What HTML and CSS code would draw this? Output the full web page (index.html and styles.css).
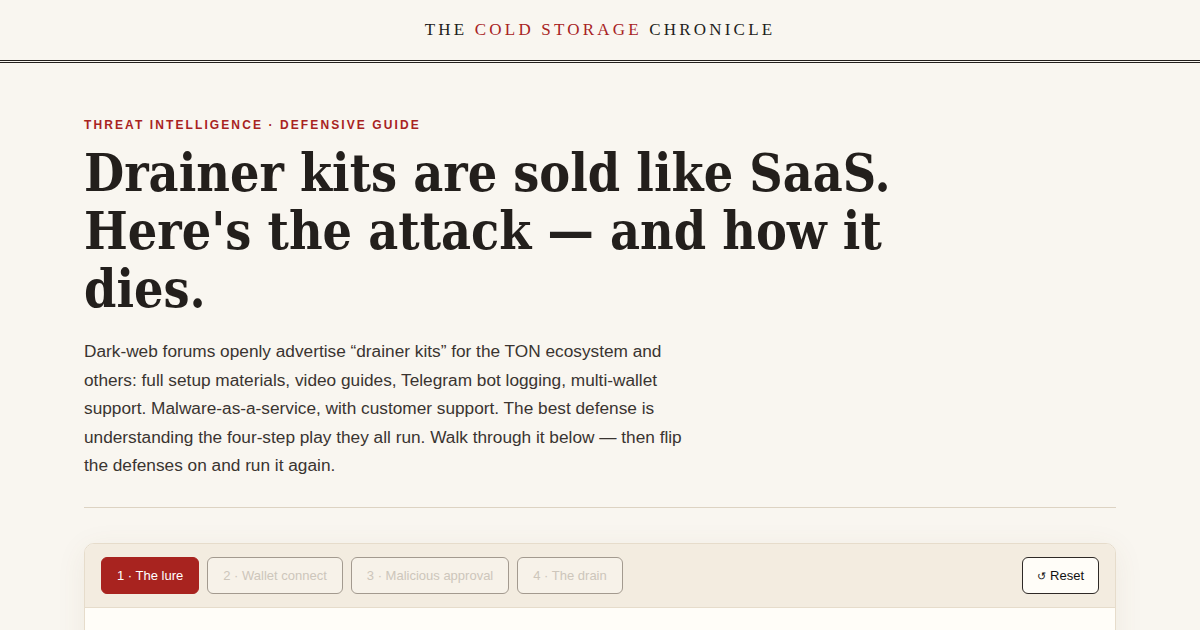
FILE: index.html
```html
<!DOCTYPE html>
<html lang="en">
<head>
  <meta charset="UTF-8">
  <meta name="viewport" content="width=device-width, initial-scale=1.0">
  <title>Drainer kits are sold like SaaS — The Cold Storage Chronicle</title>
  <link rel="stylesheet" href="styles.css">
</head>
<body>
  <header class="masthead">
    <div class="masthead-title">THE <span class="accent">COLD STORAGE</span> CHRONICLE</div>
  </header>

  <main class="article">
    <p class="kicker">Threat intelligence · Defensive guide</p>
    <h1 class="headline">Drainer kits are sold like SaaS. Here's the attack — and how it dies.</h1>
    <p class="dek">Dark-web forums openly advertise “drainer kits” for the TON ecosystem and others: full setup materials, video guides, Telegram bot logging, multi-wallet support. Malware-as-a-service, with customer support. The best defense is understanding the four-step play they all run. Walk through it below — then flip the defenses on and run it again.</p>

    <hr class="rule">

    <section class="sim">
      <div class="sim-bar">
        <div class="steps">
          <button class="step active">1 · The lure</button>
          <button class="step">2 · Wallet connect</button>
          <button class="step">3 · Malicious approval</button>
          <button class="step">4 · The drain</button>
        </div>
        <button class="reset"><span class="reset-icon">↺</span> Reset</button>
      </div>
      <div class="sim-body"></div>
    </section>
  </main>
</body>
</html>
```

FILE: styles.css
```css
body {
  margin: 0;
  background: #f9f6f0;
  color: #231f1c;
  font-family: 'Liberation Sans', Arial, sans-serif;
}

.masthead {
  height: 60px;
  display: flex;
  align-items: center;
  justify-content: center;
  border-bottom: 3px double #231f1c;
}

.masthead-title {
  font-family: 'Liberation Serif', 'Times New Roman', serif;
  font-size: 17px;
  letter-spacing: 3.2px;
  color: #231f1c;
}

.masthead-title .accent {
  color: #a8231f;
}

.article {
  max-width: 1032px;
  margin: 0 auto;
  padding-top: 55px;
}

.kicker {
  margin: 0 0 12px;
  font-size: 12px;
  font-weight: bold;
  letter-spacing: 2.1px;
  text-transform: uppercase;
  color: #a8231f;
}

.headline {
  margin: 0 0 19px;
  max-width: 840px;
  font-family: 'DejaVu Serif Condensed', 'DejaVu Serif', Georgia, serif;
  font-stretch: condensed;
  font-size: 51.5px;
  line-height: 58px;
  font-weight: bold;
  color: #231f1c;
}

.dek {
  margin: 0;
  max-width: 605px;
  font-size: 17.25px;
  line-height: 28.5px;
  color: #3a3430;
}

.rule {
  margin: 27px 0 35px;
  border: 0;
  border-top: 1px solid #ddd3c3;
}

.sim {
  border: 1px solid #e6dccb;
  border-radius: 10px;
  overflow: hidden;
  box-shadow: 0 6px 30px rgba(120, 90, 50, 0.08);
}

.sim-bar {
  display: flex;
  justify-content: space-between;
  align-items: center;
  padding: 13px 16px;
  background: #f3ece0;
  border-bottom: 1px solid #e6dccb;
}

.steps {
  display: flex;
  gap: 8px;
}

.step {
  height: 37px;
  padding: 0 15px;
  border: 1px solid #a39a8f;
  border-radius: 6px;
  background: #f7f2e9;
  color: #cdc6bb;
  font-family: 'Liberation Sans', Arial, sans-serif;
  font-size: 13px;
}

.step.active {
  background: #a8231f;
  border-color: #a8231f;
  color: #fff;
}

.reset {
  height: 37px;
  padding: 0 14px;
  border: 1px solid #2e2926;
  border-radius: 6px;
  background: #fffdf8;
  color: #111;
  font-family: 'Liberation Sans', Arial, sans-serif;
  font-size: 13px;
}

.reset-icon {
  font-size: 11px;
}

.sim-body {
  height: 200px;
  background: #fffdf8;
}
```
